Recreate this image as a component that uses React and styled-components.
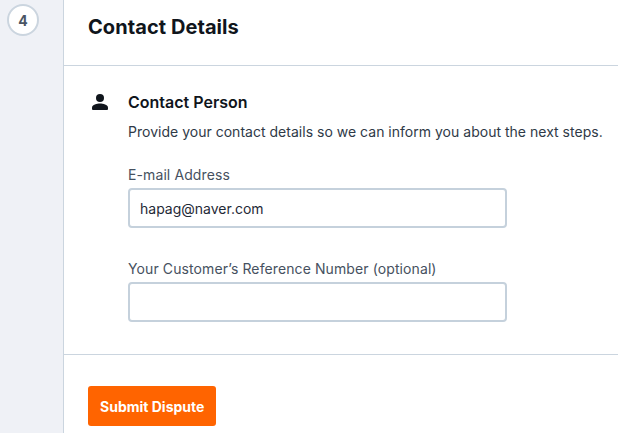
import React from "react";
import styled, { createGlobalStyle } from "styled-components";

const GlobalStyle = createGlobalStyle`
html, body {
  margin: 0;
  height: 100%;
  overflow: hidden;
  background: #fff;
  font-family: Inter, "Liberation Sans", sans-serif;
}
`
const Page = styled.div`
display: flex;
width: 618px;
height: 433px;
overflow: hidden;
`
const Rail = styled.div`
flex: none;
background: #eff1f6;
border-right: 1px solid #cbd5df;
padding: 4px 0 0 7px;
width: 56px;
`
const Step = styled.div`
width: 28px;
height: 28px;
border: 2px solid #cbd5df;
border-radius: 50%;
background: #fff;
color: #4a5564;
font-size: 14px;
font-weight: 700;
display: flex;
align-items: center;
justify-content: center;
`
const Main = styled.div`
flex: 1;
min-width: 0;
display: flex;
flex-direction: column;
`
const Header = styled.div`
height: 66px;
box-sizing: border-box;
padding: 15px 24px 0;
border-bottom: 1px solid #cbd5df;
`
const Title = styled.h1`
margin: 0;
font-size: 20px;
line-height: 24px;
font-weight: 700;
letter-spacing: 0.07px;
color: #10151c;
`
const Section = styled.div`
display: flex;
padding: 24px 0 32px 24px;
border-bottom: 1px solid #cbd5df;
`
const IconBox = styled.div`
width: 40px;
flex: none;
color: #10151c;
`
const Body = styled.div`
flex: 1;
min-width: 0;
`
const Heading = styled.h2`
margin: 0;
font-size: 16px;
line-height: 24px;
font-weight: 600;
color: #10151c;
white-space: nowrap;
`
const Lead = styled.p`
margin: 8px 0 0;
font-size: 14px;
line-height: 20px;
letter-spacing: 0.015px;
color: #2f3a47;
white-space: nowrap;
`
const Field = styled.div`
margin-top: ${(p) => p.$top}px;
`
const Label = styled.label`
display: block;
font-size: 14px;
line-height: 20px;
letter-spacing: 0.1px;
color: #465160;
margin-bottom: 3px;
white-space: nowrap;
`
const Input = styled.input`
display: block;
width: 379px;
height: 40px;
box-sizing: border-box;
padding: 0 10px;
border: 2px solid #c5d1dc;
border-radius: 4px;
background: #fff;
font-family: inherit;
font-size: 14px;
color: #1f2a37;
outline: none;
`
const Footer = styled.div`
padding: 31px 24px 0;
`
const Submit = styled.button`
height: 40px;
padding: 0 12px;
border: none;
border-radius: 3px;
background: #ff6400;
color: #fff;
font-family: inherit;
font-size: 14px;
font-weight: 700;
`

const PersonIcon = () => (
  <svg width="24" height="24" viewBox="0 0 24 24" fill="currentColor">
    <circle cx="12" cy="8" r="4" />
    <path d="M12 13.5c-2.9 0-8 1.4-8 4V19a1 1 0 0 0 1 1h14a1 1 0 0 0 1-1v-1.500c0-2.600-5.100-4-8-4z" />
  </svg>
)

const App = () => {
  return (
    <Page>
      <GlobalStyle />
      <Rail>
        <Step>4</Step>
      </Rail>
      <Main>
        <Header>
          <Title>Contact Details</Title>
        </Header>
        <Section>
          <IconBox>
            <PersonIcon />
          </IconBox>
          <Body>
            <Heading>Contact Person</Heading>
            <Lead>Provide your contact details so we can inform you about the next steps.</Lead>
            <Field $top={23}>
              <Label>E-mail Address</Label>
              <Input defaultValue="hapag@naver.com" />
            </Field>
            <Field $top={31}>
              <Label>Your Customer’s Reference Number (optional)</Label>
              <Input />
            </Field>
          </Body>
        </Section>
        <Footer>
          <Submit>Submit Dispute</Submit>
        </Footer>
      </Main>
    </Page>
  );
}

export default App;
